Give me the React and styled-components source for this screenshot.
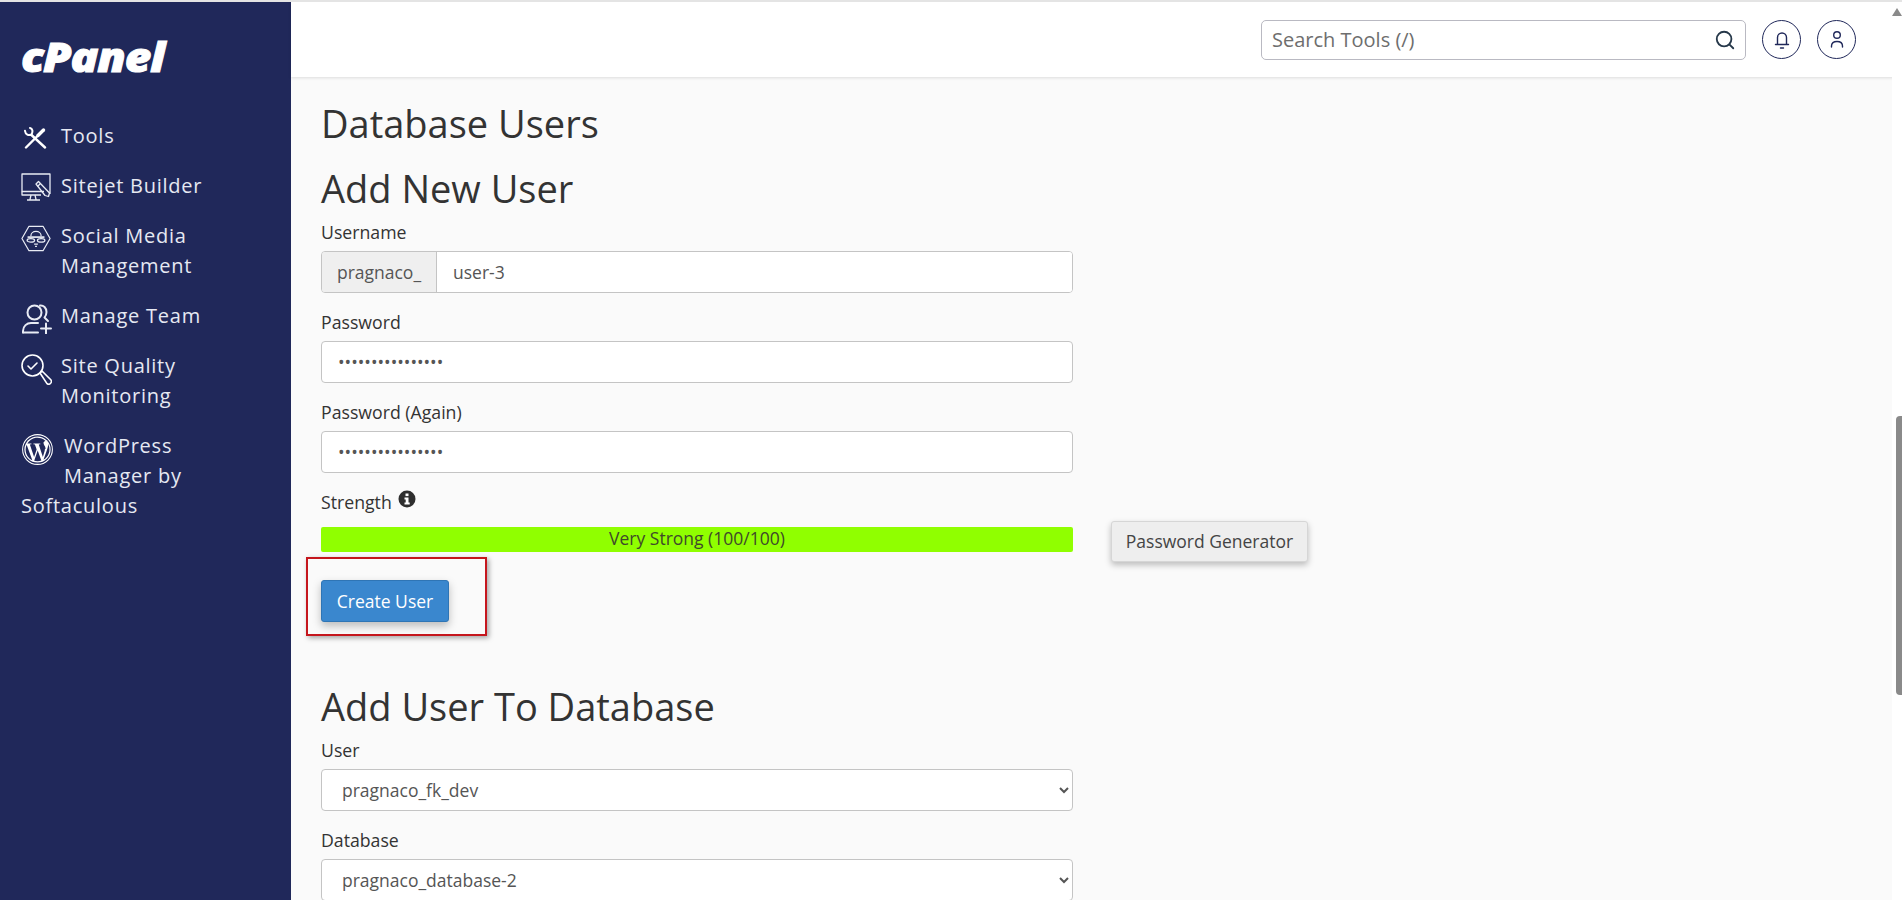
import React from 'react';
import styled, { createGlobalStyle } from 'styled-components';

const GlobalStyle = createGlobalStyle`
  html, body {
    margin: 0;
    height: 100%;
    overflow: hidden;
    background: #fafafa;
    font-family: "Open Sans", "Noto Sans", sans-serif;
  }
  * { box-sizing: border-box; }
`;

const ToolsIcon = () => (
  <svg width="23" height="22" viewBox="0 0 23 22" fill="none" stroke="#fff" strokeLinecap="round" strokeLinejoin="round">
    <path d="M2 20.500L13 9.500" strokeWidth="2.400" />
    <path d="M14 8.500l5.500-5.500" strokeWidth="3.400" />
    <path d="M7.500 8L21 20.500" strokeWidth="2.400" />
    <path d="M6 1c2.500.6 3.200 3.500 1.500 6.500C4.500 9 1.500 7.500 1 3.800" strokeWidth="2" />
  </svg>
);

const SitejetIcon = () => (
  <svg width="30" height="30" viewBox="0 0 30 30" fill="none" stroke="#e8ebf4" strokeWidth="1.300" strokeLinejoin="round">
    <path d="M23 18.500H1V1h28v20" />
    <path d="M1 18.500v3.500h19" />
    <path d="M10 22l-1 4.500M14 22l1 4.500M6 27h13" />
    <path d="M15 11l2.500-2.500 11 11.500-1 3.500-3.500-1z" />
    <path d="M16.500 13.500l3-3" />
  </svg>
);

const SocialIcon = () => (
  <svg width="30" height="27" viewBox="0 0 32 28" fill="none" stroke="#e8ebf4" strokeWidth="1.300" strokeLinejoin="round">
    <path d="M8.500 1h15L31 14l-7.500 13h-15L1 14z" />
    <path d="M10.500 11.500c0-3 2.500-5 5.500-5s5.500 2 5.500 5" />
    <path d="M7 12.500h18" strokeWidth="1.800" />
    <ellipse cx="10.500" cy="16" rx="4" ry="1.800" />
    <ellipse cx="21.500" cy="16" rx="4" ry="1.800" />
    <path d="M14 20h4M15 22.500h2" />
  </svg>
);

const TeamIcon = () => (
  <svg width="30" height="30" viewBox="0 0 30 30" fill="none" stroke="#e8ebf4" strokeWidth="2" strokeLinecap="round" strokeLinejoin="round">
    <circle cx="12.500" cy="8.500" r="7" />
    <path d="M18 1.500c3.500-.5 6.500 2.500 6.500 6.500 0 2.200-.8 4-2 5.500l3.500 3.500" />
    <path d="M1 28.500v-1.500c0-5 4-8 8-8h7" />
    <path d="M1 28.500h15" />
    <path d="M24 19.500v10M19 24.500h10" />
  </svg>
);

const QualityIcon = () => (
  <svg width="31" height="31" viewBox="0 0 31 31" fill="none" stroke="#fff" strokeWidth="1.600" strokeLinecap="round" strokeLinejoin="round">
    <circle cx="11.500" cy="11.500" r="10.500" />
    <path d="M7 12l3 3 6-6" />
    <path d="M19 19l2-2 8.800 8.800a2.500 2.500 0 0 1 0 3.200l-.6.600a2.500 2.500 0 0 1-3.200 0z" />
  </svg>
);

const WordpressIcon = () => (
  <svg width="31" height="31" viewBox="0 0 30 30">
    <circle cx="15" cy="15" r="14.400" fill="none" stroke="#fff" strokeWidth="1" />
    <circle cx="15" cy="15" r="12.700" fill="#fff" />
    <path fill="#20285a" d="M3.500 15c0 4.600 2.700 8.500 6.500 10.400L4.500 10.400A11.400 11.400 0 0 0 3.500 15zM22.800 14.400c0-1.400-.5-2.400-1-3.100-.5-.9-1-1.700-1-2.600 0-1 .8-2 1.900-2h.1A11.500 11.500 0 0 0 5.100 9.200h.7c1.200 0 3-.1 3-.1.600 0 .7.800.1.900l-1.300.1 4.100 12.200 2.500-7.400-1.700-4.800-1.200-.1c-.6 0-.5-.9.100-.9 0 0 1.900.1 3 .1s3-.1 3-.1c.6 0 .7.800.1.900l-1.300.1 4 12.100 1.100-3.700c.5-1.500.9-2.700.9-3.900zM15.200 16l-3.400 9.900a11.500 11.500 0 0 0 7-.2l-.1-.1zM25.100 9.500c0 .4.100.8.100 1.200 0 1.200-.2 2.500-.9 4.200l-3.500 10.100A11.500 11.500 0 0 0 25.100 9.500z" />
  </svg>
);

const InfoIcon = () => (
  <svg width="18" height="18" viewBox="0 0 18 18">
    <circle cx="9" cy="9" r="8.500" fill="#2e2e2e" />
    <rect x="7.500" y="3.500" width="3" height="2.600" fill="#fff" />
    <path fill="#fff" d="M6.500 7.500h4v5h1.200v2H6.500v-2h1.200v-3H6.500z" />
  </svg>
);

const navItems = [
  { label: 'Tools', icon: <ToolsIcon />, offset: 6, indent: 3 },
  { label: 'Sitejet Builder', icon: <SitejetIcon />, offset: 2 },
  { label: 'Social Media\nManagement', icon: <SocialIcon />, offset: 4 },
  { label: 'Manage Team', icon: <TeamIcon />, offset: 3, indent: 1 },
  { label: 'Site Quality\nMonitoring', icon: <QualityIcon />, offset: 3 },
];

const Layout = styled.div`
  display: flex;
  height: 100vh;
  border-top: 2px solid #e4e4e4;
  overflow: hidden;
`;

const Sidebar = styled.aside`
  width: 291px;
  flex: none;
  background: #20285a;
  color: #e6e9f2;
  padding: 37px 21px 0;
`;

const Logo = styled.div`
  height: 34px;
  margin-bottom: 48px;
  font-weight: 800;
  font-style: italic;
  font-size: 41px;
  line-height: 34px;
  letter-spacing: -1px;
  color: #fff;
  -webkit-text-stroke: 1px #fff;
  transform: scaleX(1.12);
  transform-origin: left center;
`;

const Nav = styled.nav`
  display: flex;
  flex-direction: column;
  gap: 20px;
`;

const NavRow = styled.a`
  display: grid;
  grid-template-columns: 40px 1fr;
  font-size: 20px;
  line-height: 30px;
  letter-spacing: 0.750px;
  white-space: pre-line;
`;

const IconSlot = styled.span`
  display: block;
  height: 30px;
  padding-top: ${(p) => p.$offset || 0}px;
  padding-left: ${(p) => p.$indent || 0}px;
  svg { display: block; }
`;

const WordpressRow = styled.a`
  display: block;
  font-size: 20px;
  line-height: 30px;
  letter-spacing: 0.750px;
  svg {
    float: left;
    margin: 3px 11px 0 1px;
  }
`;

const WordpressText = styled.span`
  display: block;
  padding-left: 43px;
  white-space: pre-line;
`;

const Main = styled.div`
  flex: 1;
  min-width: 0;
  display: flex;
  flex-direction: column;
  position: relative;
`;

const Header = styled.header`
  height: 75px;
  flex: none;
  background: #fff;
  box-shadow: 0 1px 3px rgba(0, 0, 0, 0.12);
  display: flex;
  align-items: center;
  justify-content: flex-end;
  padding: 0 46px 0 0;
  gap: 16px;
`;

const SearchBox = styled.div`
  width: 485px;
  height: 40px;
  border: 1px solid #b9b9c2;
  border-radius: 5px;
  display: flex;
  align-items: center;
  justify-content: space-between;
  padding: 0 9px 0 10px;
  font-size: 20px;
  color: #6e6e6e;
`;

const RoundButton = styled.span`
  width: 39px;
  height: 39px;
  border-radius: 50%;
  border: 1px solid #20285a;
  display: flex;
  align-items: center;
  justify-content: center;
`;

const Content = styled.main`
  flex: 1;
  padding: 21px 0 0 30px;
  color: #333;
`;

const PageTitle = styled.h1`
  margin: 0;
  font-size: 38px;
  line-height: 50px;
  font-weight: 400;
`;

const SectionTitle = styled.h2`
  margin: ${(p) => p.$top}px 0 0;
  font-size: 38px;
  line-height: 50px;
  font-weight: 400;
`;

const Field = styled.div`
  width: 752px;
  margin-top: ${(p) => p.$top}px;
`;

const Label = styled.label`
  display: block;
  font-size: 17.700px;
  line-height: 24px;
  font-weight: 500;
  margin-bottom: 7px;
`;

const InputGroup = styled.div`
  display: flex;
  height: 42px;
  border: 1px solid #c4c4c4;
  border-radius: 4px;
  overflow: hidden;
  background: #fff;
`;

const Addon = styled.span`
  width: 115px;
  flex: none;
  display: flex;
  align-items: center;
  justify-content: center;
  background: #efefef;
  border-right: 1px solid #c4c4c4;
  font-size: 17.500px;
  color: #555;
`;

const GroupInput = styled.input`
  flex: 1;
  border: 0;
  outline: 0;
  padding: 0 16px;
  font-family: inherit;
  font-size: 17.500px;
  color: #555;
`;

const Input = styled.input`
  display: block;
  width: 100%;
  height: 42px;
  border: 1px solid #c4c4c4;
  border-radius: 4px;
  background: #fff;
  padding: 0 16px;
  font-size: 17.500px;
  font-family: inherit;
  color: #555;
  outline: 0;
`;

const Select = styled.select`
  display: block;
  width: 100%;
  height: 42px;
  border: 1px solid #c4c4c4;
  border-radius: 4px;
  background: #fff;
  padding: 0 16px;
  font-size: 17.500px;
  font-family: inherit;
  color: #555;
  outline: 0;
`;

const StrengthRow = styled.div`
  display: flex;
  align-items: flex-start;
  gap: 38px;
  margin-top: 1px;
`;

const StrengthBar = styled.div`
  width: 752px;
  height: 25px;
  margin-top: 6px;
  background: #90ff00;
  border-radius: 2px;
  font-size: 17.500px;
  line-height: 23px;
  text-align: center;
  color: #3f4a2a;
`;

const GeneratorButton = styled.button`
  width: 197px;
  height: 41px;
  padding: 0 0 2px;
  border: 1px solid #d6d6d6;
  border-radius: 3px;
  background: #eee;
  box-shadow: 0 3px 6px rgba(0, 0, 0, 0.25);
  font-family: inherit;
  font-size: 17.500px;
  color: #444;
`;

const ButtonWrap = styled.div`
  position: relative;
  width: 128px;
  margin-top: 18px;
`;

const Highlight = styled.span`
  position: absolute;
  left: -15px;
  top: -23px;
  width: 181px;
  height: 79px;
  border: 2.500px solid #c5161d;
  box-shadow: 2px 2px 5px rgba(0, 0, 0, 0.35);
  pointer-events: none;
`;

const PrimaryButton = styled.button`
  display: block;
  width: 128px;
  height: 42px;
  padding: 0;
  border: 1px solid #2f75b5;
  border-radius: 3px;
  background: #3a87ce;
  box-shadow: 0 4px 8px rgba(0, 0, 0, 0.25);
  font-family: inherit;
  font-size: 17.500px;
  color: #fff;
`;

const ScrollTrack = styled.div`
  position: absolute;
  top: 0;
  right: 0;
  bottom: 0;
  width: 10px;
  background: #fff;
`;

const ScrollThumb = styled.div`
  width: 6px;
  height: 279px;
  margin: 414px 0 0 4px;
  background: #8a8a8a;
  border-radius: 4px 0 0 4px;
`;

const ScrollArrow = styled.div`
  position: absolute;
  top: 6px;
  right: 0;
  width: 0;
  height: 0;
  border-left: 5px solid transparent;
  border-right: 5px solid transparent;
  border-bottom: 8px solid #8a8a8a;
`;

const InfoDot = styled.span`
  display: inline-flex;
  vertical-align: 1px;
  margin-left: 6px;
`;

export default function App() {
  return (
    <>
      <GlobalStyle />
      <Layout>
        <Sidebar>
          <Logo>cPanel</Logo>
          <Nav>
            {navItems.map((item) => (
              <NavRow key={item.label}>
                <IconSlot $offset={item.offset} $indent={item.indent}>{item.icon}</IconSlot>
                <span>{item.label}</span>
              </NavRow>
            ))}
            <WordpressRow>
              <WordpressIcon />
              <WordpressText>{'WordPress\nManager by'}</WordpressText>
              Softaculous
            </WordpressRow>
          </Nav>
        </Sidebar>
        <Main>
          <Header>
            <SearchBox>
              Search Tools (/)
              <svg width="22" height="22" viewBox="0 0 24 24" fill="none" stroke="#26384a" strokeWidth="2" strokeLinecap="round">
                <circle cx="11" cy="11" r="8" />
                <path d="M17 17l4 4" />
              </svg>
            </SearchBox>
            <RoundButton>
              <svg width="18" height="20" viewBox="0 0 18 20" fill="none" stroke="#20285a" strokeWidth="1.400" strokeLinecap="round" strokeLinejoin="round">
                <path d="M4.500 14V7.500a4.500 4.500 0 0 1 9 0V14" />
                <path d="M2.500 14.500h13M7.500 18h3" />
              </svg>
            </RoundButton>
            <RoundButton>
              <svg width="18" height="20" viewBox="0 0 18 20" fill="none" stroke="#20285a" strokeWidth="1.400" strokeLinecap="round">
                <circle cx="9" cy="5" r="3.300" />
                <path d="M3.500 17v-1c0-3 2-4.500 5.500-4.500s5.500 1.500 5.500 4.500v1" />
              </svg>
            </RoundButton>
          </Header>
          <Content>
            <PageTitle>Database Users</PageTitle>
            <SectionTitle $top={15}>Add New User</SectionTitle>
            <Field $top={7}>
              <Label>Username</Label>
              <InputGroup>
                <Addon>pragnaco_</Addon>
                <GroupInput defaultValue="user-3" />
              </InputGroup>
            </Field>
            <Field $top={17}>
              <Label>Password</Label>
              <Input type="password" defaultValue="aaaaaaaaaaaaaaaa" />
            </Field>
            <Field $top={17}>
              <Label>Password (Again)</Label>
              <Input type="password" defaultValue="aaaaaaaaaaaaaaaa" />
            </Field>
            <Field $top={17}>
              <Label>
                Strength
                <InfoDot><InfoIcon /></InfoDot>
              </Label>
            </Field>
            <StrengthRow>
              <StrengthBar>Very Strong (100/100)</StrengthBar>
              <GeneratorButton>Password Generator</GeneratorButton>
            </StrengthRow>
            <ButtonWrap>
              <Highlight />
              <PrimaryButton>Create User</PrimaryButton>
            </ButtonWrap>
            <SectionTitle $top={59}>Add User To Database</SectionTitle>
            <Field $top={7}>
              <Label>User</Label>
              <Select defaultValue="pragnaco_fk_dev">
                <option>pragnaco_fk_dev</option>
              </Select>
            </Field>
            <Field $top={17}>
              <Label>Database</Label>
              <Select defaultValue="pragnaco_database-2">
                <option>pragnaco_database-2</option>
              </Select>
            </Field>
          </Content>
          <ScrollTrack>
            <ScrollArrow />
            <ScrollThumb />
          </ScrollTrack>
        </Main>
      </Layout>
    </>
  );
}
